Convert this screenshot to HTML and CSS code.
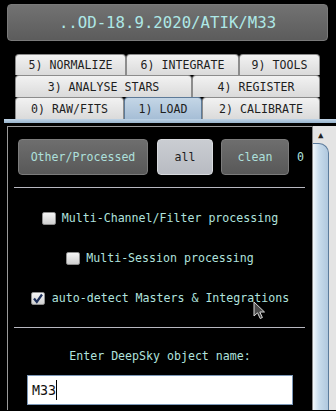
FILE: index.html
```html
<!DOCTYPE html>
<html lang="en">
<head>
  <meta charset="UTF-8">
  <title>Load</title>
  <link rel="stylesheet" href="styles.css">
</head>
<body>
  <div class="title">..OD-18.9.2020/ATIK/M33</div>

  <div class="tabs">
    <div class="tabrow">
      <div class="tab w111">5) NORMALIZE</div>
      <div class="tab w113">6) INTEGRATE</div>
      <div class="tab grow">9) TOOLS</div>
    </div>
    <div class="tabrow r2">
      <div class="tab w177">3) ANALYSE STARS</div>
      <div class="tab grow">4) REGISTER</div>
    </div>
    <div class="tabrow r2">
      <div class="tab w109">0) RAW/FITS</div>
      <div class="tab w78 active">1) LOAD</div>
      <div class="tab grow">2) CALIBRATE</div>
    </div>
  </div>
  <div class="tabline"></div>

  <div class="pane">
    <div class="content">
      <div class="btnrow">
        <div class="btn dark wide">Other/Processed</div>
        <div class="btn light">all</div>
        <div class="btn dark mid">clean</div>
        <span class="count">0</span>
      </div>
      <div class="sep"></div>

      <div class="opt"><span class="cb"></span>Multi-Channel/Filter processing</div>
      <div class="opt"><span class="cb"></span>Multi-Session processing</div>
      <div class="opt"><span class="cb checked"><svg width="12" height="11" viewBox="0 0 12 11"><path d="M2 5.5 L4.8 9 L10 1.5" fill="none" stroke="#1d2f5a" stroke-width="2.2"/></svg></span>auto-detect Masters &amp; Integrations</div>

      <div class="sep sep2"></div>
      <div class="label">Enter DeepSky object name:</div>
      <div class="field">M33<span class="caret"></span></div>
    </div>
    <div class="scrollbar">
      <div class="sb-up">&#9650;</div>
      <div class="sb-thumb"></div>
    </div>
  </div>

  <svg class="cursor" width="14" height="20" viewBox="0 0 14 20">
    <path d="M1 1 L1 15 L4.5 11.8 L7.2 17.5 L9.4 16.5 L6.8 11 L11.5 11 Z" fill="#4a4a4a" stroke="#d8d8d8" stroke-width="1"/>
  </svg>
</body>
</html>
```

FILE: styles.css
```css
body {
  margin: 0;
  background-color: #000;
  font-family: 'DejaVu Sans Mono', monospace;
  width: 336px;
  height: 411px;
  overflow: hidden;
  position: relative;
}

.title {
  margin: 4px 8px 0 7px;
  height: 37px;
  box-sizing: border-box;
  border: 1px solid #7a7a7a;
  border-radius: 4px;
  background: linear-gradient(#727272, #5c5c5c);
  color: #aee8e6;
  font-size: 15.7px;
  display: flex;
  align-items: center;
  justify-content: center;
}

.tabs {
  margin: 13px 16px 0 15px;
}

.tabrow {
  display: flex;
  height: 21px;
}

.tabrow.r2 {
  height: 22px;
}

.tab {
  box-sizing: border-box;
  border: 1px solid #8c8c8c;
  border-bottom: none;
  border-radius: 4px 4px 0 0;
  background: linear-gradient(#f2f2f2, #dadada);
  color: #1e1e1e;
  font-size: 11.6px;
  display: flex;
  align-items: center;
  justify-content: center;
}

.tab.active {
  background: linear-gradient(#c4d6e6, #a6bed6);
  border-color: #5d7a98;
}

.w111 { width: 111px; }
.w113 { width: 113px; }
.w177 { width: 177px; }
.w109 { width: 109px; }
.w78 { width: 78px; }
.grow { flex: 1; }

.tabline {
  margin-left: 4px;
  height: 4px;
  background: linear-gradient(#c0d4e6, #98b4cc);
}

.pane {
  display: flex;
  margin-top: 3px;
  height: 284px;
}

.content {
  flex: 1;
  margin-left: 7px;
  border-top: 1px solid #9a9a9a;
  border-left: 1px solid #9a9a9a;
  color: #b0e2de;
  font-size: 11.6px;
}

.btnrow {
  display: flex;
  align-items: center;
  margin: 12px 0 0 10px;
  height: 36px;
}

.btn {
  box-sizing: border-box;
  height: 36px;
  border-radius: 4px;
  display: flex;
  align-items: center;
  justify-content: center;
  margin-right: 8px;
}

.btn.dark {
  background: linear-gradient(#6e6e6e, #585858);
  border: 1px solid #7c7c7c;
  color: #aee0dc;
}

.btn.light {
  width: 56px;
  background: linear-gradient(#cacdd2, #b8bbc2);
  border: 1px solid #d8dade;
  color: #1e1e1e;
}

.btn.wide {
  width: 130px;
  margin-right: 9px;
}

.btn.mid {
  width: 68px;
}

.count {
  margin-left: 0;
}

.sep {
  height: 1px;
  background-color: #b8b8c0;
  margin: 12px 7px 0 6px;
}

.opt {
  height: 40px;
  display: flex;
  align-items: center;
  justify-content: center;
}

.sep + .opt {
  margin-top: 10px;
}

.cb {
  width: 14px;
  height: 13px;
  box-sizing: border-box;
  border: 1px solid #8e8e8e;
  border-radius: 2px;
  background: linear-gradient(#f6f6f6, #cfcfcf);
  margin-right: 6px;
  display: flex;
  align-items: center;
  justify-content: center;
}

.cb.checked {
  margin-right: 7px;
}

.sep2 {
  margin-top: 9px;
}

.label {
  height: 20px;
  margin-top: 18px;
  display: flex;
  align-items: center;
  justify-content: center;
}

.field {
  box-sizing: border-box;
  margin: 9px 0 0 19px;
  width: 266px;
  height: 30px;
  border: 1px solid #7c98b8;
  background-color: #fff;
  color: #111;
  font-size: 13.3px;
  padding-left: 4px;
  display: flex;
  align-items: center;
}

.caret {
  display: inline-block;
  width: 1px;
  height: 20px;
  background-color: #000;
}

.scrollbar {
  width: 23px;
  border-left: 1px solid #8a8a8a;
  background-color: #e4e4e4;
  display: flex;
  flex-direction: column;
}

.sb-up {
  height: 17px;
  font-size: 9px;
  color: #222;
  padding-left: 5px;
  display: flex;
  align-items: center;
}

.sb-thumb {
  flex: 1;
  width: 16px;
  box-sizing: border-box;
  border: 1px solid #5c7c9c;
  border-left: none;
  border-bottom: none;
  border-radius: 0 10px 0 0;
  background: linear-gradient(90deg, #f2f8fc, #c8dcec 40%, #b0c8de);
}

.cursor {
  position: absolute;
  left: 253px;
  top: 301px;
}
```
